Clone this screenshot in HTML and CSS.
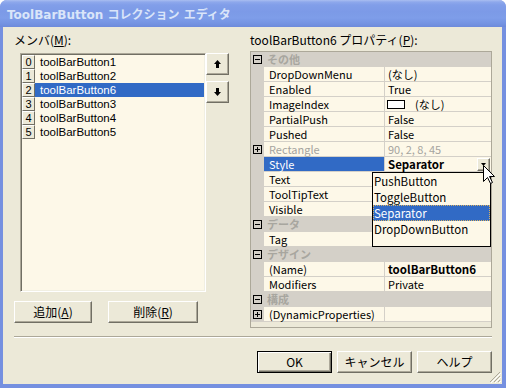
FILE: index.html
```html
<!DOCTYPE html>
<html lang="ja">
<head>
    <meta charset="UTF-8">
    <title>ToolBarButton コレクション エディタ</title>
    <link rel="stylesheet" href="styles.css">
</head>
<body>
    <div class="window">
        <div class="title-bar"><span class="title-text">ToolBarButton コレクション エディタ</span></div>
        <div class="client">
            <div class="main">
                <!-- メンバ一覧 -->
                <div class="members-pane">
                    <div class="pane-label">メンバ(<u>M</u>):</div>
                    <div class="members-row">
                        <div class="member-list">
                            <div class="member-item"><span class="member-index">0</span><span class="member-name">toolBarButton1</span></div>
                            <div class="member-item"><span class="member-index">1</span><span class="member-name">toolBarButton2</span></div>
                            <div class="member-item selected"><span class="member-index">2</span><span class="member-name">toolBarButton6</span></div>
                            <div class="member-item"><span class="member-index">3</span><span class="member-name">toolBarButton3</span></div>
                            <div class="member-item"><span class="member-index">4</span><span class="member-name">toolBarButton4</span></div>
                            <div class="member-item"><span class="member-index">5</span><span class="member-name">toolBarButton5</span></div>
                        </div>
                        <div class="order-buttons">
                            <button class="btn order-btn">
                                <svg width="7" height="8" viewBox="0 0 7 8"><path d="M3.5 0 L7 4 H5 V8 H2 V4 H0 Z" fill="#000"/></svg>
                            </button>
                            <button class="btn order-btn">
                                <svg width="7" height="8" viewBox="0 0 7 8"><path d="M3.5 8 L7 4 H5 V0 H2 V4 H0 Z" fill="#000"/></svg>
                            </button>
                        </div>
                    </div>
                    <div class="member-actions">
                        <button class="btn btn-add">追加(<u>A</u>)</button>
                        <button class="btn btn-remove">削除(<u>R</u>)</button>
                    </div>
                </div>

                <!-- プロパティグリッド -->
                <div class="props-pane">
                    <div class="pane-label">toolBarButton6 プロパティ(<u>P</u>):</div>
                    <div class="prop-grid">
                        <div class="prop-row category"><span class="gutter"><span class="expander minus"></span></span><span class="cat-name">その他</span></div>
                        <div class="prop-row"><span class="gutter"></span><span class="prop-name">DropDownMenu</span><span class="prop-value">(なし)</span></div>
                        <div class="prop-row"><span class="gutter"></span><span class="prop-name">Enabled</span><span class="prop-value">True</span></div>
                        <div class="prop-row"><span class="gutter"></span><span class="prop-name">ImageIndex</span><span class="prop-value"><span class="image-swatch"></span>(なし)</span></div>
                        <div class="prop-row"><span class="gutter"></span><span class="prop-name">PartialPush</span><span class="prop-value">False</span></div>
                        <div class="prop-row"><span class="gutter"></span><span class="prop-name">Pushed</span><span class="prop-value">False</span></div>
                        <div class="prop-row readonly"><span class="gutter"><span class="expander plus"></span></span><span class="prop-name">Rectangle</span><span class="prop-value">90, 2, 8, 45</span></div>
                        <div class="prop-row selected"><span class="gutter"></span><span class="prop-name">Style</span><span class="prop-value bold">Separator<span class="dd-button"><svg width="5" height="3" viewBox="0 0 5 3"><path d="M0 0 H5 L2.5 3 Z" fill="#000"/></svg></span></span></div>
                        <div class="prop-row"><span class="gutter"></span><span class="prop-name">Text</span><span class="prop-value"></span></div>
                        <div class="prop-row"><span class="gutter"></span><span class="prop-name">ToolTipText</span><span class="prop-value"></span></div>
                        <div class="prop-row"><span class="gutter"></span><span class="prop-name">Visible</span><span class="prop-value"></span></div>
                        <div class="prop-row category"><span class="gutter"><span class="expander minus"></span></span><span class="cat-name">データ</span></div>
                        <div class="prop-row"><span class="gutter"></span><span class="prop-name">Tag</span><span class="prop-value"></span></div>
                        <div class="prop-row category"><span class="gutter"><span class="expander minus"></span></span><span class="cat-name">デザイン</span></div>
                        <div class="prop-row"><span class="gutter"></span><span class="prop-name">(Name)</span><span class="prop-value bold">toolBarButton6</span></div>
                        <div class="prop-row"><span class="gutter"></span><span class="prop-name">Modifiers</span><span class="prop-value">Private</span></div>
                        <div class="prop-row category"><span class="gutter"><span class="expander minus"></span></span><span class="cat-name">構成</span></div>
                        <div class="prop-row"><span class="gutter"><span class="expander plus"></span></span><span class="prop-name">(DynamicProperties)</span><span class="prop-value"></span></div>

                        <div class="style-dropdown">
                            <div class="dd-item">PushButton</div>
                            <div class="dd-item">ToggleButton</div>
                            <div class="dd-item selected">Separator</div>
                            <div class="dd-item">DropDownButton</div>
                        </div>
                        <svg class="cursor" width="12" height="19" viewBox="0 0 12 19">
                            <path d="M0.5 0.5 V16.5 L4.5 12.5 L7.5 18.5 L9.5 17.5 L6.5 11.5 H11.5 Z" fill="#fff" stroke="#000" stroke-width="1"/>
                        </svg>
                    </div>
                </div>
            </div>

            <div class="separator"></div>

            <div class="dialog-buttons">
                <button class="btn dialog-btn default">OK</button>
                <button class="btn dialog-btn">キャンセル</button>
                <button class="btn dialog-btn">ヘルプ</button>
            </div>

            <svg class="size-grip" width="12" height="12" viewBox="0 0 12 12">
                <path d="M11 1 L1 11 M11 5 L5 11 M11 9 L9 11" stroke="#ACA899" stroke-width="1"/>
                <path d="M12 2 L2 12 M12 6 L6 12 M12 10 L10 12" stroke="#fff" stroke-width="1"/>
            </svg>
        </div>
    </div>
</body>
</html>
```

FILE: styles.css
```css
* {
    margin: 0;
    padding: 0;
    box-sizing: border-box;
}

body {
    background: #fff;
    font-family: "Noto Sans CJK JP", sans-serif;
    font-size: 12px;
    color: #000;
}

.window {
    width: 506px;
    height: 388px;
    background: #7590e0;
    border-radius: 7px 7px 0 0;
    display: flex;
    flex-direction: column;
    overflow: hidden;
}

.title-bar {
    height: 27px;
    padding: 4px 0 0 7px;
    background: linear-gradient(180deg, #a9bef1 0px, #8ea8ec 2px, #819ee9 5px, #7c9ae7 12px, #7e9de9 18px, #7594e3 23px, #6d8adb 27px);
}

.title-text {
    font-family: "DejaVu Sans", "Noto Sans CJK JP", sans-serif;
    font-weight: bold;
    font-size: 12px;
    line-height: 22px;
    color: #dae5f9;
    white-space: nowrap;
}

.client {
    flex: 1;
    position: relative;
    margin: 0 4px 4px 3px;
    padding: 6px 10px 0 11px;
    background: #ece9d8;
}

.main {
    display: flex;
}

.members-pane {
    width: 236px;
}

.props-pane {
    width: 242px;
}

.pane-label {
    height: 14px;
    line-height: 14px;
    font-size: 12px;
    white-space: nowrap;
}

/* classic 3D button */
.btn {
    font: inherit;
    color: #000;
    background: #ece9d8;
    border: 1px solid;
    border-color: #fff #716f64 #716f64 #fff;
    box-shadow: inset -1px -1px 0 #aca899;
    display: flex;
    align-items: center;
    justify-content: center;
    line-height: 14px;
}

.members-row {
    display: flex;
    margin: 6px 0 0 6px;
}

.member-list {
    width: 186px;
    height: 239px;
    padding: 1px;
    background: #fdf8e8;
    border: 1px solid;
    border-color: #aca899 #fff #fff #aca899;
    box-shadow: inset 1px 1px 0 #716f64, inset -1px -1px 0 #f1efe2;
}

.member-item {
    display: flex;
    height: 14px;
    line-height: 14px;
    font-family: "Liberation Sans", sans-serif;
    font-size: 11.5px;
}

.member-index {
    width: 13px;
    background: #ece9d8;
    border: 1px solid;
    border-color: #fff #716f64 #716f64 #fff;
    text-align: center;
    font-size: 11px;
    line-height: 12px;
}

.member-name {
    flex: 1;
    padding-left: 5px;
}

.member-item.selected .member-name {
    background: #316ac5;
    color: #fff;
}

.order-buttons {
    display: flex;
    flex-direction: column;
    gap: 6px;
}

.order-btn {
    width: 23px;
    height: 22px;
}

.member-actions {
    display: flex;
    gap: 16px;
    margin-top: 9px;
}

.btn-add {
    width: 78px;
    height: 22px;
}

.btn-remove {
    width: 90px;
    height: 22px;
}

/* property grid */
.prop-grid {
    position: relative;
    margin-top: 4px;
    height: 277px;
    border: 1px solid #aca899;
    background: #ece9d8;
}

.prop-row {
    display: flex;
    height: 15px;
    font-size: 11px;
    line-height: 14px;
    white-space: nowrap;
}

.gutter {
    width: 13px;
    flex: none;
    background: #d4d0c8;
    display: flex;
    justify-content: center;
    padding-top: 3px;
}

.expander {
    position: relative;
    width: 9px;
    height: 9px;
    border: 1px solid #000;
}

.expander::before,
.expander.plus::after {
    content: '';
    position: absolute;
    background: #000;
}

.expander::before {
    left: 1px;
    top: 3px;
    width: 5px;
    height: 1px;
}

.expander.plus::after {
    left: 3px;
    top: 1px;
    width: 1px;
    height: 5px;
}

.prop-name {
    width: 121px;
    flex: none;
    padding-left: 5px;
    background: #fdf8e8;
    border-right: 1px solid #d4d0c8;
    border-bottom: 1px solid #d4d0c8;
}

.prop-value {
    flex: 1;
    display: flex;
    padding-left: 3px;
    background: #fdf8e8;
    border-bottom: 1px solid #d4d0c8;
}

.prop-value.bold {
    font-weight: bold;
    font-size: 11.5px;
}

.category {
    background: #d4d0c8;
}

.cat-name {
    padding-left: 3px;
    font-weight: bold;
    color: #a8a69f;
}

.readonly .prop-name,
.readonly .prop-value {
    color: #a5a49f;
}

.prop-row.selected .prop-name {
    background: #316ac5;
    color: #fff;
}

.image-swatch {
    width: 18px;
    height: 9px;
    margin: 3px 10px 0 -1px;
    background: #fff;
    border: 1px solid #000;
}

.dd-button {
    width: 13px;
    height: 13px;
    margin: 1px 1px 0 auto;
    background: #ece9d8;
    border: 1px solid;
    border-color: #fff #716f64 #716f64 #fff;
    box-shadow: inset -1px -1px 0 #aca899;
    display: flex;
    align-items: center;
    justify-content: center;
}

.style-dropdown {
    position: absolute;
    left: 121px;
    top: 120px;
    width: 119px;
    height: 75px;
    background: #fdf8e8;
    border: 1px solid #000;
    font-size: 11.5px;
    z-index: 2;
}

.dd-item {
    height: 16px;
    line-height: 16px;
    padding-left: 1px;
    white-space: nowrap;
}

.dd-item.selected {
    background: #316ac5;
    color: #fff;
    outline: 1px dotted #d8b060;
    outline-offset: -1px;
}

.cursor {
    position: absolute;
    left: 232px;
    top: 113px;
    z-index: 3;
}

.separator {
    margin-top: 8px;
    height: 2px;
    border-top: 1px solid #aca899;
    border-bottom: 1px solid #fff;
}

.dialog-buttons {
    display: flex;
    justify-content: flex-end;
    gap: 5px;
    margin-top: 13px;
}

.dialog-btn {
    width: 75px;
    height: 22px;
}

.dialog-btn.default {
    border-color: #000;
    box-shadow: inset 1px 1px 0 #fff, inset -1px -1px 0 #716f64, inset -2px -2px 0 #aca899;
}

.size-grip {
    position: absolute;
    right: 1px;
    bottom: 1px;
}
```
